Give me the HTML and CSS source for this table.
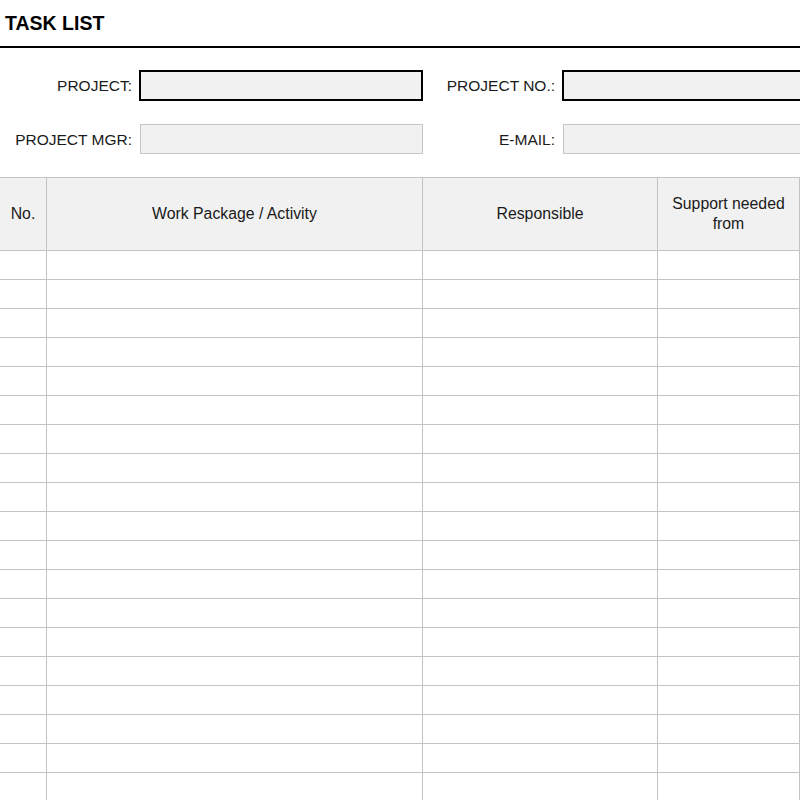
FILE: index.html
```html
<!DOCTYPE html>
<html lang="en">
<head>
<meta charset="utf-8">
<title>Task List</title>
<link rel="stylesheet" href="styles.css">
</head>
<body>
<div class="page">
  <header class="title-bar">
    <h1 class="title">TASK LIST</h1>
  </header>

  <section class="form">
    <div class="label">PROJECT:</div>
    <div class="field field-strong"></div>
    <div class="label">PROJECT NO.:</div>
    <div class="field field-strong field-open"></div>

    <div class="label">PROJECT MGR:</div>
    <div class="field field-thin"></div>
    <div class="label">E-MAIL:</div>
    <div class="field field-thin field-open"></div>
  </section>

  <section class="grid" id="grid">
    <div class="cell head">No.</div>
    <div class="cell head">Work Package / Activity</div>
    <div class="cell head">Responsible</div>
    <div class="cell head">Support needed<br>from</div>
    <div class="cell head"></div>
  </section>
</div>
<script src="script.js"></script>
</body>
</html>
```

FILE: script.js
```js
(function () {
  var grid = document.getElementById('grid');
  for (var r = 0; r < 20; r++) {
    for (var c = 0; c < 5; c++) {
      var d = document.createElement('div');
      d.className = 'cell';
      grid.appendChild(d);
    }
  }
})();
```

FILE: styles.css
```css
html, body {
  margin: 0;
  padding: 0;
  background: #ffffff;
}

body {
  width: 800px;
  height: 800px;
  overflow: hidden;
  font-family: "Liberation Sans", Arial, sans-serif;
  color: #111111;
}

.page {
  width: 800px;
  overflow: hidden;
}

.title-bar {
  height: 48px;
  box-sizing: border-box;
  padding: 13px 0 0 5px;
  border-bottom: 2px solid #000000;
}

.title {
  margin: 0;
  font-size: 19.5px;
  line-height: 21px;
  font-weight: bold;
  color: #000000;
}

.form {
  display: grid;
  grid-template-columns: 139px 284px 139px 1fr;
  grid-template-rows: 31px 30px;
  row-gap: 23px;
  padding-top: 22px;
  margin-bottom: 23px;
}

.label {
  display: flex;
  align-items: center;
  justify-content: flex-end;
  padding-right: 7px;
  padding-top: 1px;
  font-size: 15.5px;
  color: #1a1a1a;
}

.field {
  background: #f1f1f1;
  box-sizing: border-box;
}

.field-strong {
  border: 2px solid #000000;
}

.field-thin {
  border: 1px solid #c6c6c6;
  margin-left: 1px;
}

.field-open {
  border-right-width: 0;
}

.grid {
  display: grid;
  grid-template-columns: 46px 375px 234px 141px 1fr;
  grid-template-rows: 72px;
  grid-auto-rows: 28px;
  gap: 1px;
  padding-top: 1px;
  background: #c3c3c3;
}

.cell {
  background: #ffffff;
}

.cell.head {
  background: #f1f1f1;
  display: flex;
  align-items: center;
  justify-content: center;
  text-align: center;
  font-size: 15.8px;
  line-height: 20px;
  color: #1a1a1a;
}
```
